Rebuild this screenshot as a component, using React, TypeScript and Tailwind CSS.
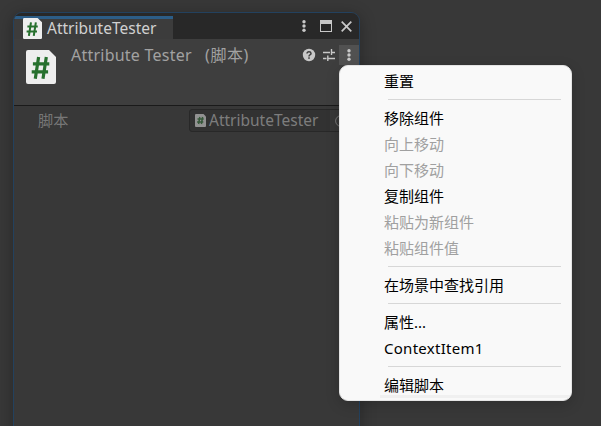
import type { ReactNode } from "react";

const fontStack = "font-['Noto_Sans','Noto_Sans_CJK_SC',sans-serif]";

function ScriptIcon({ className }: { className: string }) {
  return (
    <svg className={className} viewBox="0 0 30 34" preserveAspectRatio="none">
      <path d="M2 0H23L30 7V32Q30 34 28 34H2Q0 34 0 32V2Q0 0 2 0Z" fill="#eeeeee" />
      <path d="M12.6 7L9.3 28.8M20.3 7L17 28.8M6.9 13.8H23.3M5.7 21.9H22.1" stroke="#27702e" strokeWidth="3.2" fill="none" />
    </svg>
  );
}

function Kebab() {
  return (
    <svg className="h-3 w-1 shrink-0" viewBox="0 0 4 12" fill="#c8c8c8">
      <circle cx="2" cy="1.7" r="1.7" />
      <circle cx="2" cy="6" r="1.7" />
      <circle cx="2" cy="10.3" r="1.7" />
    </svg>
  );
}

function TitleBar() {
  return (
    <div className="flex h-[26px] justify-between bg-[#282828] pt-[3px]">
      <div className="flex w-[159px] border-t-[3px] border-[#2c5d87] bg-[#3c3c3c] pl-[9px]">
        <ScriptIcon className="-mt-px h-[21px] w-[19px] shrink-0" />
        <span className="ml-[5px] text-[15.5px] leading-[19px] text-[#d0d0d0]">AttributeTester</span>
      </div>
      <div className="flex h-5 items-center pr-[7px]">
        <Kebab />
        <svg className="ml-[14px] h-3 w-3" viewBox="0 0 12 12">
          <rect x="0.5" y="0.5" width="11" height="11" fill="none" stroke="#c8c8c8" />
          <rect width="12" height="4" fill="#c8c8c8" />
        </svg>
        <svg className="ml-[9px] h-[11px] w-[11px]" viewBox="0 0 11 11">
          <path d="M0.7 0.7L10.3 10.3M10.3 0.7L0.7 10.3" stroke="#c8c8c8" strokeWidth="1.7" />
        </svg>
      </div>
    </div>
  );
}

function ComponentHeader() {
  return (
    <div className="flex h-[67px] border-b border-[#1a1a1a] bg-[#3e3e3e] pl-3">
      <ScriptIcon className="mt-[11px] h-[34px] w-[30px] shrink-0" />
      <div className="ml-[15px] mt-[5px] flex flex-1 whitespace-pre text-[16px] leading-[22px] text-[#a2a2a2]">
        <span className="w-[134px] tracking-[0.23px]">Attribute Tester</span>
        <span className="tracking-[0.6px]">(脚本)</span>
      </div>
      <div className="mt-[6px] flex h-5 items-center">
        <svg className="h-3 w-3 overflow-visible" viewBox="0 0 12 12">
          <circle cx="6" cy="6" r="6.2" fill="#c8c8c8" />
          <path d="M4 4.5Q4.1 2.7 6 2.7T8 4.4Q8 5.3 6.9 5.9Q6 6.4 6 7.4" fill="none" stroke="#3e3e3e" strokeWidth="1.5" />
          <rect x="5.2" y="8.3" width="1.6" height="1.5" fill="#3e3e3e" />
        </svg>
        <svg className="ml-2 h-3 w-3" viewBox="0 0 12 12" fill="none" stroke="#c8c8c8" strokeWidth="1.4">
          <path d="M0 3.5H7M8 3.5H12M8.5 0V6M0 9.5H3.5M5 9.5H12M4.8 6.5V12" />
        </svg>
        <div className="ml-1 flex h-5 w-5 items-center justify-center bg-[#515151]">
          <Kebab />
        </div>
      </div>
    </div>
  );
}

function ScriptField() {
  return (
    <div className="flex pl-6 pt-[3px]">
      <span className="w-[151px] text-[15.2px] leading-[22px] text-[#777777]">脚本</span>
      <div className="flex h-[23px] flex-1 items-center overflow-hidden rounded-[3px] border border-[#282828] bg-[#323232] pl-[5px] text-[#7d7d7d]">
        <svg className="h-[13px] w-[11px] shrink-0" viewBox="0 0 11 13">
          <path d="M1 0H8.5L11 2.5V12Q11 13 10 13H1Q0 13 0 12V1Q0 0 1 0Z" fill="#929292" />
          <path d="M4.8 3L3.6 10M7.6 3L6.4 10M2.5 5H8.7M2.1 8H8.3" stroke="#36583a" strokeWidth="1.5" />
        </svg>
        <span className="-mt-px ml-[3px] w-[121px] text-[15.5px] leading-[22px]">AttributeTester</span>
        <div className="flex h-full flex-1 items-center bg-[#373737] pl-[5px]">
          <svg className="h-3 w-3" viewBox="0 0 12 12">
            <circle cx="6" cy="6" r="5.4" fill="none" stroke="#777777" />
            <circle cx="6" cy="6" r="2" fill="#777777" />
          </svg>
        </div>
      </div>
    </div>
  );
}

function MenuItem({ children, disabled = false }: { children: ReactNode; disabled?: boolean }) {
  return (
    <div className={`h-[26px] pl-11 text-[15px] leading-[25px] ${disabled ? "text-[#a0a0a0]" : "text-black"}`}>
      {children}
    </div>
  );
}

function Separator() {
  return <div className="mb-[6px] ml-12 mr-[10px] mt-1 h-px bg-[#d7d7d7]" />;
}

function ContextMenu() {
  return (
    <div className="absolute left-[339px] top-[65px] h-[336px] w-[233px] overflow-hidden rounded-[9px] border border-[#e4e4e4] bg-[#f9f9f9] pt-[3px]">
      <MenuItem>重置</MenuItem>
      <Separator />
      <MenuItem>移除组件</MenuItem>
      <MenuItem disabled>向上移动</MenuItem>
      <MenuItem disabled>向下移动</MenuItem>
      <MenuItem>复制组件</MenuItem>
      <MenuItem disabled>粘贴为新组件</MenuItem>
      <MenuItem disabled>粘贴组件值</MenuItem>
      <Separator />
      <MenuItem>在场景中查找引用</MenuItem>
      <Separator />
      <MenuItem>属性...</MenuItem>
      <MenuItem><span className="tracking-[0.28px]">ContextItem1</span></MenuItem>
      <Separator />
      <MenuItem>编辑脚本</MenuItem>
      <div className="-mt-1 ml-10 h-[3px] bg-[#f0f0f0]" />
    </div>
  );
}

export default function App() {
  return (
    <main className={`relative h-[426px] w-[601px] overflow-hidden bg-[#383838] pl-[13px] pt-3 ${fontStack}`}>
      <section className="h-[430px] w-[347px] overflow-hidden rounded-t-[9px] border border-[#23415e] bg-[#383838] shadow-[0_3px_16px_rgba(0,0,0,0.3)]">
        <TitleBar />
        <ComponentHeader />
        <ScriptField />
      </section>
      <div className="absolute left-[339px] top-[65px] h-[336px] w-[233px] rounded-[9px] shadow-[0_4px_14px_rgba(0,0,0,0.18)]" />
      <ContextMenu />
    </main>
  );
}
